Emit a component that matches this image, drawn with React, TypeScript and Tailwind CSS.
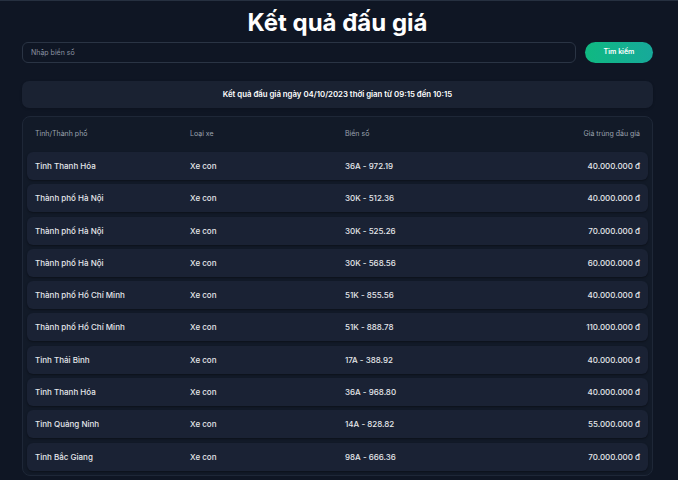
import clsx from "clsx";

interface Result { province: string; type: string; plate: string; price: string; }

const results: Result[] = [
  { province: "Tỉnh Thanh Hóa", type: "Xe con", plate: "36A - 972.19", price: "40.000.000 đ" },
  { province: "Thành phố Hà Nội", type: "Xe con", plate: "30K - 512.36", price: "40.000.000 đ" },
  { province: "Thành phố Hà Nội", type: "Xe con", plate: "30K - 525.26", price: "70.000.000 đ" },
  { province: "Thành phố Hà Nội", type: "Xe con", plate: "30K - 568.56", price: "60.000.000 đ" },
  { province: "Thành phố Hồ Chí Minh", type: "Xe con", plate: "51K - 855.56", price: "40.000.000 đ" },
  { province: "Thành phố Hồ Chí Minh", type: "Xe con", plate: "51K - 888.78", price: "110.000.000 đ" },
  { province: "Tỉnh Thái Bình", type: "Xe con", plate: "17A - 388.92", price: "40.000.000 đ" },
  { province: "Tỉnh Thanh Hóa", type: "Xe con", plate: "36A - 968.80", price: "40.000.000 đ" },
  { province: "Tỉnh Quảng Ninh", type: "Xe con", plate: "14A - 828.82", price: "55.000.000 đ" },
  { province: "Tỉnh Bắc Giang", type: "Xe con", plate: "98A - 666.36", price: "70.000.000 đ" },
];

const cols = "grid grid-cols-[155px_155px_1fr_1fr] items-center px-2";

export default function App() {
  return (
    <div className="h-[480px] overflow-hidden bg-[#0f1624] border-t border-[#263040] font-['Inter','Noto_Sans',sans-serif] text-[#e5e7eb]">
      <div className="pl-[22px] pr-[25px] pt-[8px]">
        <h1 className="text-center text-[24px] leading-[28px] font-bold text-white">Kết quả đấu giá</h1>

        {/* ô tìm kiếm */}
        <div className="mt-[5px] flex items-center gap-[9px]">
          <input
            placeholder="Nhập biển số"
            className="h-[21px] flex-1 rounded-[6px] border border-[#2a3444] bg-[#0f1624] px-[8px] text-[7px] text-gray-300 placeholder:text-[#8b93a1] outline-none"
          />
          <button className="h-[21px] w-[68px] rounded-full bg-gradient-to-r from-[#10b981] to-[#17a99a] text-[7px] font-semibold text-white">
            Tìm kiếm
          </button>
        </div>

        <div className="mt-[18px] flex h-[27px] items-center justify-center rounded-[7px] bg-[#1a2232] text-[7.8px] font-semibold text-white shadow-sm">
          Kết quả đấu giá ngày 04/10/2023 thời gian từ 09:15 đến 10:15
        </div>

        <div className="mt-[8px] rounded-[8px] border border-[#1e2737] bg-[#121a28] px-[4px] pb-[4px]">
          <div className={clsx(cols, "h-[35px] text-[7px] text-[#9ca3af]")}>
            <span>Tỉnh/Thành phố</span>
            <span>Loại xe</span>
            <span>Biển số</span>
            <span className="text-right">Giá trúng đấu giá</span>
          </div>
          <div className="flex flex-col gap-[4.3px]">
            {results.map((r, i) => (
              <div key={i} className={clsx(cols, "h-[28px] rounded-[6px] bg-[#1a2234] text-[8px] font-medium shadow-[0_1px_2px_rgba(0,0,0,0.35)]")}>
                <span>{r.province}</span>
                <span>{r.type}</span>
                <span>{r.plate}</span>
                <span className="text-right">{r.price}</span>
              </div>
            ))}
          </div>
        </div>
      </div>
    </div>
  );
}
